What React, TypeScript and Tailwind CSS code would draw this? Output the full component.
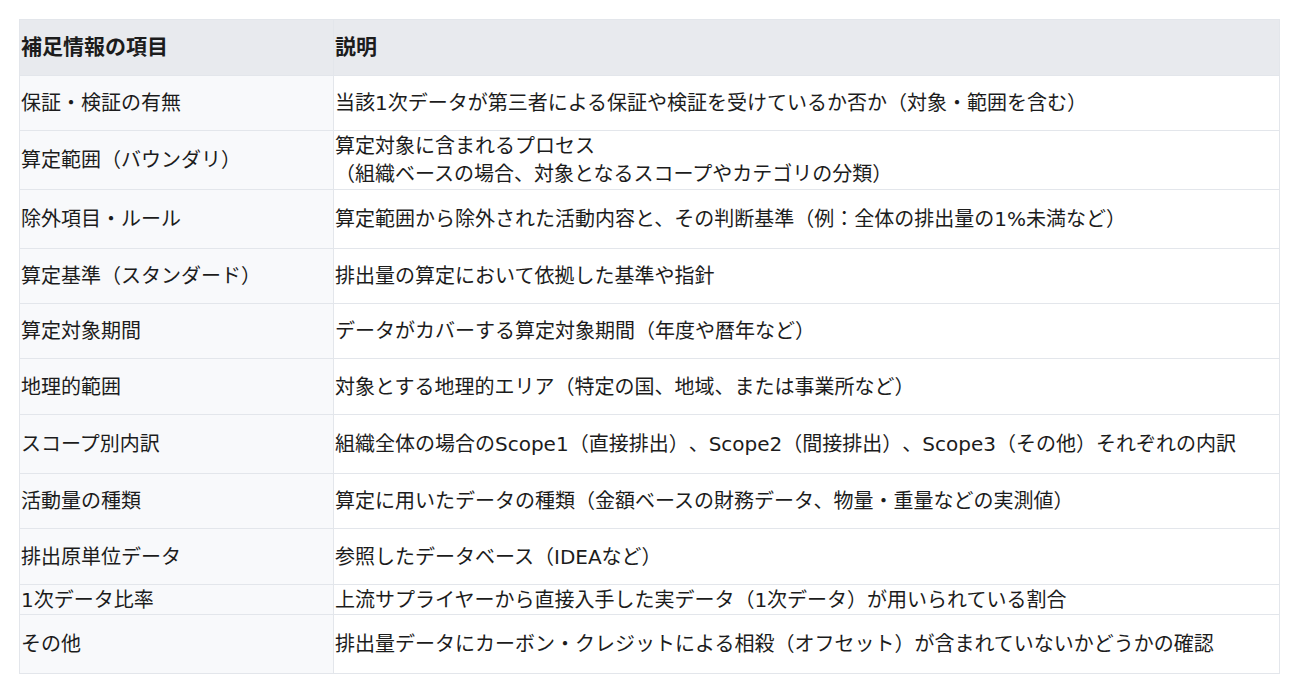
import * as React from 'react';

const rows: { item: string; desc: React.ReactNode; h: string }[] = [
  { item: '保証・検証の有無', desc: '当該1次データが第三者による保証や検証を受けているか否か（対象・範囲を含む）', h: 'h-[55px]' },
  {
    item: '算定範囲（バウンダリ）',
    desc: (
      <>
        算定対象に含まれるプロセス
        <br />
        （組織ベースの場合、対象となるスコープやカテゴリの分類）
      </>
    ),
    h: 'h-[59px]',
  },
  { item: '除外項目・ルール', desc: '算定範囲から除外された活動内容と、その判断基準（例：全体の排出量の1%未満など）', h: 'h-[59px]' },
  { item: '算定基準（スタンダード）', desc: '排出量の算定において依拠した基準や指針', h: 'h-[55px]' },
  { item: '算定対象期間', desc: 'データがカバーする算定対象期間（年度や暦年など）', h: 'h-[55px]' },
  { item: '地理的範囲', desc: '対象とする地理的エリア（特定の国、地域、または事業所など）', h: 'h-[56px]' },
  { item: 'スコープ別内訳', desc: '組織全体の場合のScope1（直接排出）、Scope2（間接排出）、Scope3（その他）それぞれの内訳', h: 'h-[59px]' },
  { item: '活動量の種類', desc: '算定に用いたデータの種類（金額ベースの財務データ、物量・重量などの実測値）', h: 'h-[55px]' },
  { item: '排出原単位データ', desc: '参照したデータベース（IDEAなど）', h: 'h-[56px]' },
  { item: '1次データ比率', desc: '上流サプライヤーから直接入手した実データ（1次データ）が用いられている割合', h: 'h-[30px]' },
  { item: 'その他', desc: '排出量データにカーボン・クレジットによる相殺（オフセット）が含まれていないかどうかの確認', h: 'h-[58px]' },
];

export default function App() {
  return (
    <div className="bg-white w-[1299px] h-[699px] p-[19px] font-['DejaVu_Sans','Noto_Sans_CJK_JP',sans-serif] text-[#1c1c1c] [text-spacing-trim:space-all]">
      <div className="w-[1261px] border border-[#e3e6eb]">
        <div className="flex h-[56px] bg-[#e8eaee] border-b border-[#e3e6eb] font-bold text-[21px]">
          <div className="w-[314px] shrink-0 border-r border-[#e3e6eb] flex items-center pl-[1px]">補足情報の項目</div>
          <div className="flex-1 flex items-center pl-[1px]">説明</div>
        </div>
        {rows.map((r, i) => (
          <div
            key={i}
            className={`flex ${r.h} text-[20px] leading-[28px] ${i < rows.length - 1 ? 'border-b border-[#e3e6eb]' : ''}`}
          >
            <div className="w-[314px] shrink-0 bg-[#f8f9fb] border-r border-[#e3e6eb] flex items-center pl-[1px]">
              {r.item}
            </div>
            <div className="flex-1 flex items-center pl-[1px] whitespace-nowrap">
              <div>{r.desc}</div>
            </div>
          </div>
        ))}
      </div>
    </div>
  );
}
